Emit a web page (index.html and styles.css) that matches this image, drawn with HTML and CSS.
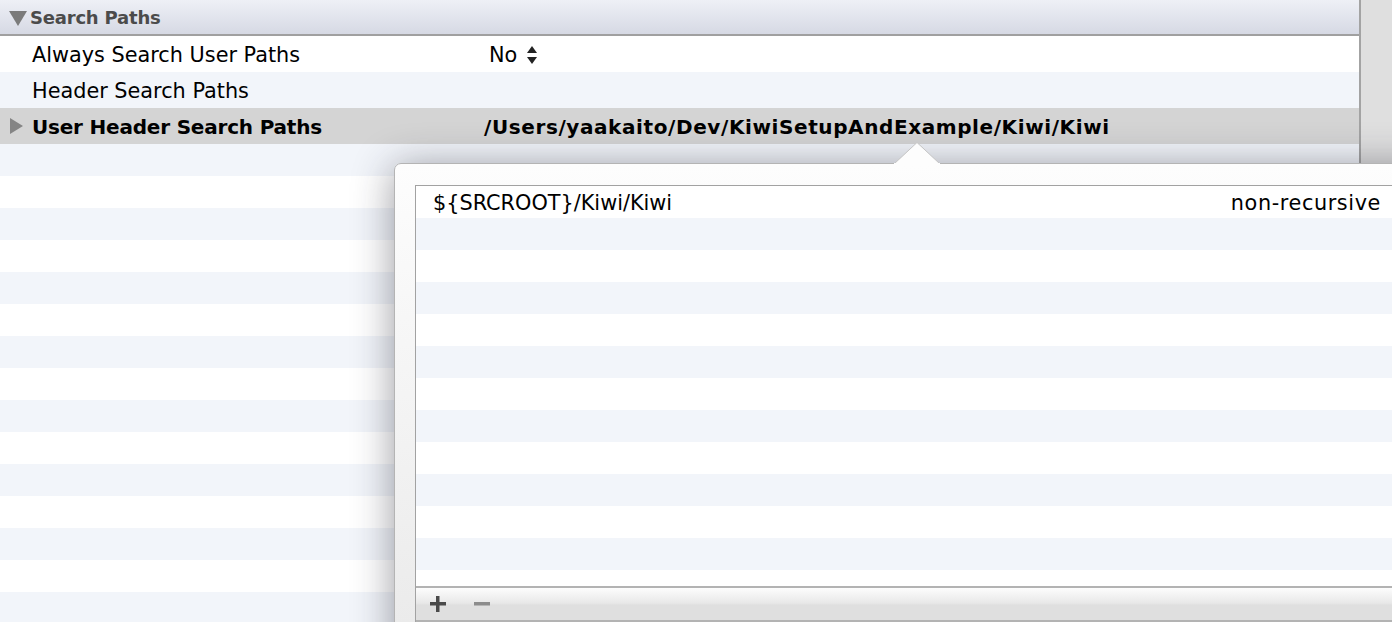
FILE: index.html
```html
<!DOCTYPE html>
<html>
<head>
<meta charset="utf-8">
<link rel="stylesheet" href="styles.css">
</head>
<body>
<div class="page">
  <div class="main">
    <div class="section-header">
      <svg class="disclosure-open" width="18" height="16" viewBox="0 0 18 16"><polygon points="0,1 18,1 9,16" fill="#7b7b7b"/></svg>
      <span class="section-title">Search Paths</span>
    </div>
    <div class="row">
      <div class="label">Always Search User Paths</div>
      <div class="value">No
        <svg class="stepper" width="10" height="18" viewBox="0 0 10 18"><polygon points="5,0 10,7 0,7" fill="#222"/><polygon points="0,11 10,11 5,18" fill="#222"/></svg>
      </div>
    </div>
    <div class="row alt">
      <div class="label">Header Search Paths</div>
      <div class="value"></div>
    </div>
    <div class="row selected">
      <svg class="disclosure-closed" width="13" height="16" viewBox="0 0 13 16"><polygon points="0,0 13,8 0,16" fill="#858585"/></svg>
      <div class="label bold">User Header Search Paths</div>
      <div class="value bold path">/Users/yaakaito/Dev/KiwiSetupAndExample/Kiwi/Kiwi</div>
    </div>
    <div class="filler"></div>
  </div>
  <div class="scroll-col"></div>

  <div class="popover">
    <svg class="arrow" width="46" height="22" viewBox="0 0 46 22"><polygon points="0,22 23,0.5 46,22" fill="#fdfdfd" stroke="#c4c4c4" stroke-width="1"/><rect x="0" y="21" width="46" height="2" fill="#fdfdfd"/></svg>
    <div class="pop-table">
      <div class="pop-rows">
        <div class="pop-row">
          <span class="pop-path">${SRCROOT}/Kiwi/Kiwi</span>
          <span class="pop-mode">non-recursive</span>
        </div>
      </div>
      <div class="pop-bar">
        <svg class="btn-plus" width="18" height="18" viewBox="0 0 18 18"><rect x="7" y="1" width="3.5" height="16" fill="#4a4a4a"/><rect x="1" y="7" width="16" height="3.5" fill="#4a4a4a"/></svg>
        <svg class="btn-minus" width="18" height="18" viewBox="0 0 18 18"><rect x="1" y="7" width="16" height="3.5" fill="#8c8c8c"/></svg>
      </div>
    </div>
  </div>
</div>
</body>
</html>
```

FILE: styles.css
```css
html, body {
  margin: 0;
  padding: 0;
  width: 1392px;
  height: 622px;
  overflow: hidden;
  background: #fff;
  font-family: "DejaVu Sans", "Liberation Sans", sans-serif;
  color: #000;
}

.page {
  position: relative;
  display: flex;
  width: 1392px;
  height: 622px;
  overflow: hidden;
}

.main {
  flex: 0 0 1359px;
  display: flex;
  flex-direction: column;
}

.scroll-col {
  flex: 1;
  background: #dfdfdf;
  border-left: 2px solid #a3a3a3;
}

.section-header {
  height: 34px;
  border-bottom: 2px solid #a0a0a0;
  background: linear-gradient(to bottom, #eef0f6, #d6d9e4);
  display: flex;
  align-items: center;
  gap: 3px;
  padding-left: 9px;
}

.disclosure-open {
  display: block;
  margin-top: 1px;
}

.section-title {
  font-weight: bold;
  font-size: 18px;
  color: #4b4b4b;
  letter-spacing: -0.2px;
}

.row {
  position: relative;
  height: 36px;
  display: flex;
  align-items: center;
  font-size: 20.8px;
  background: #fff;
}

.row.alt {
  background: #f2f5fa;
}

.row.selected {
  background: #d4d4d4;
  font-size: 20px;
}

.disclosure-closed {
  position: absolute;
  left: 10px;
  top: 10px;
}

.label {
  width: 452px;
  padding-left: 32px;
  padding-top: 1px;
  white-space: nowrap;
}

.label.bold {
  letter-spacing: -0.2px;
}

.value {
  display: flex;
  align-items: center;
  gap: 10px;
  padding-left: 5px;
  padding-top: 1px;
  white-space: nowrap;
}

.value.path {
  padding-left: 0;
  letter-spacing: 0.6px;
}

.bold {
  font-weight: bold;
}

.stepper {
  display: block;
}

.filler {
  flex: 1;
  background-image: linear-gradient(to bottom, #f2f5fa 0 32px, #fff 32px 64px);
  background-size: 100% 64px;
  background-repeat: repeat;
  background-position: 0 0;
}

.popover {
  position: absolute;
  left: 394px;
  top: 163px;
  width: 1100px;
  height: 520px;
  box-sizing: border-box;
  border: 1px solid #b4b4b4;
  border-radius: 7px;
  background: linear-gradient(to bottom, #fdfdfd, #ebebeb 460px);
  box-shadow: 0 4px 40px rgba(30, 30, 45, 0.45);
  padding: 21px 0 0 20px;
}

.arrow {
  position: absolute;
  left: 499px;
  top: -22px;
  display: block;
}

.pop-table {
  width: 1100px;
  border: 1px solid #a2a2a2;
  border-right: none;
  background: #fff;
}

.pop-rows {
  height: 400px;
  background-image: linear-gradient(to bottom, #fff 0 32px, #f2f5fa 32px 64px);
  background-size: 100% 64px;
}

.pop-row {
  height: 32px;
  width: 965px;
  box-sizing: border-box;
  padding-left: 17px;
  padding-top: 1px;
  display: flex;
  align-items: center;
  justify-content: space-between;
  font-size: 20.8px;
  white-space: nowrap;
}

.pop-mode {
  letter-spacing: 0.6px;
}

.pop-bar {
  height: 32px;
  border-top: 2px solid #b3b3b3;
  border-bottom: 2px solid #b3b3b3;
  background: linear-gradient(to bottom, #fdfdfd 0, #e8e8e8 15px, #dfdfdf 17px, #dfdfdf 100%);
  display: flex;
  align-items: center;
  gap: 26px;
  padding-left: 13px;
}

.btn-plus, .btn-minus {
  display: block;
}
```
